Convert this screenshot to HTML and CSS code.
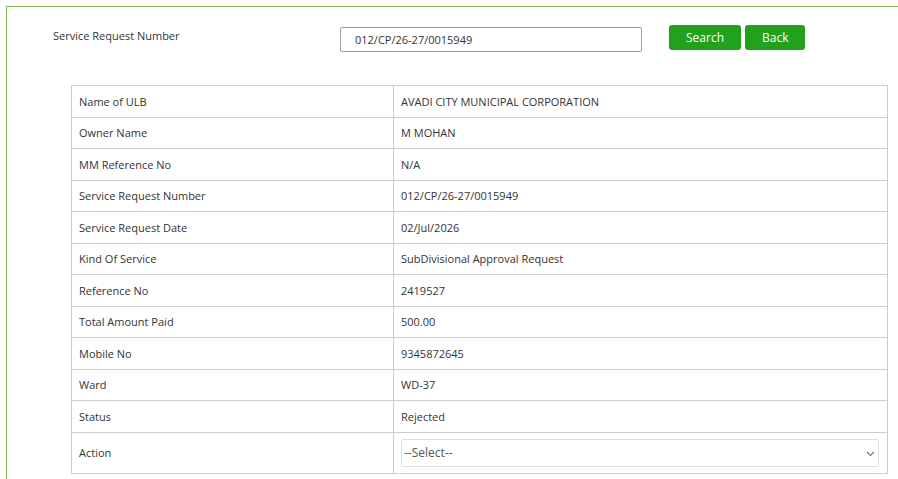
FILE: index.html
```html
<html>
  <head>
    <title>Service Request Status</title>
    <meta charset="UTF-8" />
    <meta name="viewport" content="width=device-width, initial-scale=1.0" />
    <link rel="stylesheet" href="styles.css">
  </head>

  <body>
    <div class="panel">
      <div class="search-row">
        <label class="search-label" for="srno">Service Request Number</label>
        <input id="srno" class="search-input" type="text" value="012/CP/26-27/0015949" />
        <div class="search-buttons">
          <button class="btn-green">Search</button>
          <button class="btn-green">Back</button>
        </div>
      </div>

      <table class="details">
        <tr><td class="key">Name of ULB</td><td>AVADI CITY MUNICIPAL CORPORATION</td></tr>
        <tr><td class="key">Owner Name</td><td>M MOHAN</td></tr>
        <tr><td class="key">MM Reference No</td><td>N/A</td></tr>
        <tr><td class="key">Service Request Number</td><td>012/CP/26-27/0015949</td></tr>
        <tr><td class="key">Service Request Date</td><td>02/Jul/2026</td></tr>
        <tr><td class="key">Kind Of Service</td><td>SubDivisional Approval Request</td></tr>
        <tr><td class="key">Reference No</td><td>2419527</td></tr>
        <tr><td class="key">Total Amount Paid</td><td>500.00</td></tr>
        <tr><td class="key">Mobile No</td><td>9345872645</td></tr>
        <tr><td class="key">Ward</td><td>WD-37</td></tr>
        <tr><td class="key">Status</td><td>Rejected</td></tr>
        <tr class="action-row">
          <td class="key">Action</td>
          <td>
            <div class="select-wrap">
              <select class="action-select">
                <option>--Select--</option>
                <option>Approve</option>
                <option>Reject</option>
              </select>
              <!-- dropdown chevron -->
              <svg class="chevron" width="9" height="6" viewBox="0 0 9 6">
                <path d="M1 1 L4.5 4.5 L8 1" fill="none" stroke="#777" stroke-width="1.2" />
              </svg>
            </div>
          </td>
        </tr>
      </table>
    </div>
  </body>
</html>
```

FILE: styles.css
```css
body {
  margin: 0;
  padding: 6px 0 0 6px;
  background: #ffffff;
  font-family: "Open Sans", "Noto Sans", Arial, sans-serif;
  font-size: 11px;
  color: #333333;
  overflow: hidden;
}

.panel {
  border-top: 1px solid #78b957;
  border-left: 1px solid #78b957;
  height: 600px;
}

/* Search bar */
.search-row {
  display: grid;
  grid-template-columns: 333px 329px auto;
  padding-top: 18px;
}

.search-label {
  padding-left: 46px;
  padding-top: 3px;
  font-size: 11px;
  color: #333333;
}

.search-input {
  width: 302px;
  height: 25px;
  margin-top: 2px;
  box-sizing: border-box;
  border: 1px solid #a0a0a0;
  border-radius: 2px;
  padding: 0 14px;
  font-family: inherit;
  font-size: 11px;
  color: #333333;
}

.search-buttons {
  display: flex;
  gap: 4px;
}

.btn-green {
  height: 25px;
  padding: 0 17px;
  border: none;
  border-radius: 3px;
  background-color: #22a11c;
  color: #ffffff;
  font-family: inherit;
  font-size: 12px;
}

/* Details table */
.details {
  margin: 33px 0 0 64px;
  width: 817px;
  border-collapse: collapse;
  font-size: 11px;
}

.details td {
  border: 1px solid #cccccc;
  height: 31.5px;
  padding: 0 7px;
  box-sizing: border-box;
  vertical-align: middle;
  color: #333333;
}

.details td.key {
  width: 322px;
}

.details .action-row td {
  height: 41px;
}

.select-wrap {
  position: relative;
}

.action-select {
  display: block;
  width: 478px;
  height: 28px;
  border: 1px solid #dddddd;
  border-radius: 2px;
  background: #ffffff;
  padding: 0 2px;
  font-family: inherit;
  font-size: 12px;
  color: #555555;
  appearance: none;
  -webkit-appearance: none;
}

.chevron {
  position: absolute;
  left: 465px;
  top: 12px;
}
```
